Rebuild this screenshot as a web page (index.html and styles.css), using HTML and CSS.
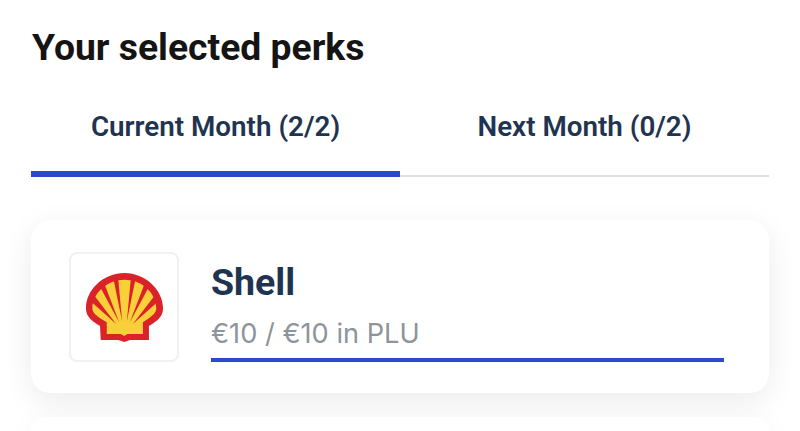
FILE: index.html
```html
<!DOCTYPE html>
<html lang="en">
<head>
<meta charset="utf-8">
<title>Your selected perks</title>
<link rel="stylesheet" href="styles.css">
</head>
<body>
<main class="page">
  <h1 class="title">Your selected perks</h1>
  <div class="tabs">
    <div class="tab tab-active">Current Month (2/2)</div>
    <div class="tab">Next Month (0/2)</div>
  </div>
  <section class="card">
    <div class="logo-box">
      <svg class="logo" viewBox="108 100 230 206" aria-hidden="true">
        <path class="shell-red" d="M223 100C160 100 108 150 108 205C108 225 118 240 150 258L152 300L205 300L222 306L240 300L296 300L296 258C328 240 338 225 338 205C338 150 285 100 223 100Z"/>
        <path class="shell-yellow" d="M223 120C172 120 127 160 127 205C127 220 142 230 170 247L170 282L212 282L222 288L232 282L278 282L278 247C303 230 318 220 318 205C318 160 275 120 223 120Z"/>
        <g class="shell-red">
          <path d="M216 245L190 117L204 116Z"/>
          <path d="M230 245L256 117L242 116Z"/>
          <path d="M207 247L147 136L161 127Z"/>
          <path d="M239 247L299 136L285 127Z"/>
          <path d="M198 252L122 184L131 165Z"/>
          <path d="M248 252L324 184L315 165Z"/>
        </g>
      </svg>
    </div>
    <div class="info">
      <div class="name">Shell</div>
      <div class="amount">€10 / €10 in PLU</div>
      <div class="bar"></div>
    </div>
  </section>
  <section class="card card-next"></section>
</main>
</body>
</html>
```
FILE: styles.css
```css
* { box-sizing: border-box; }
html, body { margin: 0; height: 100%; background: #fff; overflow: hidden; }
.page { padding: 26px 31px 0 31px; font-family: Roboto, "Liberation Sans", sans-serif; }
.title { margin: 0 0 0 1px; font-size: 37.3px; line-height: 42px; font-weight: 700; color: #141414; }
.tabs { display: flex; margin-top: 33px; border-bottom: 2px solid #dfe1e4; height: 76px; }
.tab { flex: 1; text-align: center; font-size: 27.8px; font-weight: 600; line-height: 36px; padding-top: 8px; color: #1f3450; height: 76px; }
.tab-active { border-bottom: 6px solid #2b4acb; }
.card { margin-top: 43px; height: 173px; background: #fff; border-radius: 20px; box-shadow: 0 8px 30px rgba(0,0,0,.08); padding: 32px 45px 0 38px; display: flex; gap: 32px; }
.card-next { margin-top: 24px; height: 14px; border-radius: 20px 20px 0 0; padding: 0; }
.logo-box { width: 110px; height: 110px; flex: none; border: 2px solid #f1f1f2; border-radius: 8px; display: flex; align-items: center; justify-content: center; }
.logo { width: 77px; height: 69px; }
.shell-red { fill: #d9222a; }
.shell-yellow { fill: #f9cf3a; }
.info { flex: 1; }
.name { font-size: 37.5px; font-weight: 700; line-height: 42px; color: #1f3450; margin-top: 9px; }
.amount { font-family: Inter, sans-serif; font-size: 27.2px; line-height: 32px; color: #8d949c; margin-top: 15px; }
.bar { height: 4px; background: #2b4acb; margin-top: 8px; }
```
